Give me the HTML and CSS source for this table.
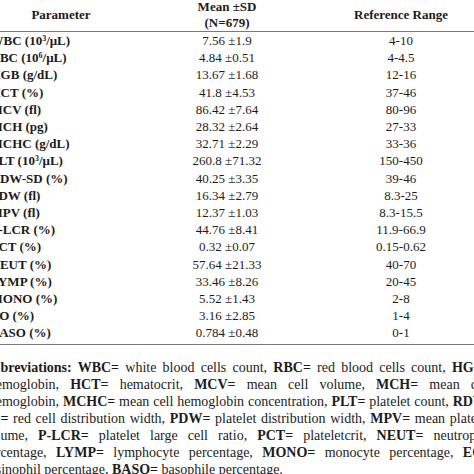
FILE: index.html
```html
<!DOCTYPE html>
<html>
<head>
<meta charset="utf-8">
<link rel="stylesheet" href="styles.css">
</head>
<body>
<div class="page">
  <table class="cbc">
    <colgroup>
      <col class="c-param">
      <col class="c-mean">
      <col class="c-range">
    </colgroup>
    <thead>
      <tr>
        <th>Parameter</th>
        <th>Mean ±SD<br>(N=679)</th>
        <th>Reference Range</th>
      </tr>
    </thead>
    <tbody>
      <tr><td class="p">WBC (10<sup>3</sup>/μL)</td><td>7.56 ±1.9</td><td>4-10</td></tr>
      <tr><td class="p">RBC (10<sup>6</sup>/μL)</td><td>4.84 ±0.51</td><td>4-4.5</td></tr>
      <tr><td class="p">HGB (g/dL)</td><td>13.67 ±1.68</td><td>12-16</td></tr>
      <tr><td class="p">HCT (%)</td><td>41.8 ±4.53</td><td>37-46</td></tr>
      <tr><td class="p">MCV (fl)</td><td>86.42 ±7.64</td><td>80-96</td></tr>
      <tr><td class="p">MCH (pg)</td><td>28.32 ±2.64</td><td>27-33</td></tr>
      <tr><td class="p">MCHC (g/dL)</td><td>32.71 ±2.29</td><td>33-36</td></tr>
      <tr><td class="p">PLT (10<sup>3</sup>/μL)</td><td>260.8 ±71.32</td><td>150-450</td></tr>
      <tr><td class="p">RDW-SD (%)</td><td>40.25 ±3.35</td><td>39-46</td></tr>
      <tr><td class="p">PDW (fl)</td><td>16.34 ±2.79</td><td>8.3-25</td></tr>
      <tr><td class="p">MPV (fl)</td><td>12.37 ±1.03</td><td>8.3-15.5</td></tr>
      <tr><td class="p">P-LCR (%)</td><td>44.76 ±8.41</td><td>11.9-66.9</td></tr>
      <tr><td class="p">PCT (%)</td><td>0.32 ±0.07</td><td>0.15-0.62</td></tr>
      <tr><td class="p">NEUT (%)</td><td>57.64 ±21.33</td><td>40-70</td></tr>
      <tr><td class="p">LYMP (%)</td><td>33.46 ±8.26</td><td>20-45</td></tr>
      <tr><td class="p">MONO (%)</td><td>5.52 ±1.43</td><td>2-8</td></tr>
      <tr><td class="p">EO (%)</td><td>3.16 ±2.85</td><td>1-4</td></tr>
      <tr class="last"><td class="p">BASO (%)</td><td>0.784 ±0.48</td><td>0-1</td></tr>
    </tbody>
  </table>
  <div class="notes">
    <div class="ln"><b>Abbreviations: WBC=</b> white blood cells count, <b>RBC=</b> red blood cells count, <b>HGB=</b></div>
    <div class="ln">haemoglobin, <b>HCT=</b> hematocrit, <b>MCV=</b> mean cell volume, <b>MCH=</b> mean cell</div>
    <div class="ln">haemoglobin, <b>MCHC=</b> mean cell hemoglobin concentration, <b>PLT=</b> platelet count, <b>RDW-</b></div>
    <div class="ln"><b>SD=</b> red cell distribution width, <b>PDW=</b> platelet distribution width, <b>MPV=</b> mean platelet</div>
    <div class="ln">volume, <b>P-LCR=</b> platelet large cell ratio, <b>PCT=</b> plateletcrit, <b>NEUT=</b> neutrophil</div>
    <div class="ln">percentage, <b>LYMP=</b> lymphocyte percentage, <b>MONO=</b> monocyte percentage, <b>EO=</b></div>
    <div class="ln end">eosinophil percentage, <b>BASO=</b> basophile percentage.</div>
  </div>
</div>
</body>
</html>
```

FILE: styles.css
```css
html, body {
  margin: 0;
  padding: 0;
  background: #ffffff;
  overflow: hidden;
}

body {
  font-family: "Liberation Serif", "Times New Roman", serif;
  color: #1c1c1c;
}

.page {
  margin: -1px 0 0 -9.5px;
  width: 520px;
}

.cbc {
  border-collapse: collapse;
  table-layout: fixed;
  width: 489px;
  font-size: 13px;
}

.c-param { width: 141px; }
.c-mean { width: 191px; }
.c-range { width: 157px; }

.cbc th {
  font-weight: bold;
  line-height: 16px;
  padding: 0;
  text-align: center;
  vertical-align: middle;
  border-bottom: 1px solid #7a7a7a;
}

.cbc td {
  padding: 0;
  line-height: 17.2px;
  text-align: center;
  white-space: nowrap;
}

.cbc td.p {
  text-align: left;
  font-weight: bold;
}

.cbc sup {
  font-size: 8px;
  line-height: 0;
  vertical-align: 4px;
}

.cbc tr.last td {
  padding-bottom: 2px;
  border-bottom: 1px solid #7a7a7a;
}

.notes {
  margin: 14px 0 0 -8px;
  width: 508.5px;
  font-size: 14px;
  line-height: 17px;
}

.notes .ln {
  text-align: justify;
  text-align-last: justify;
  white-space: nowrap;
}

.notes .ln.end {
  text-align-last: left;
}
```
